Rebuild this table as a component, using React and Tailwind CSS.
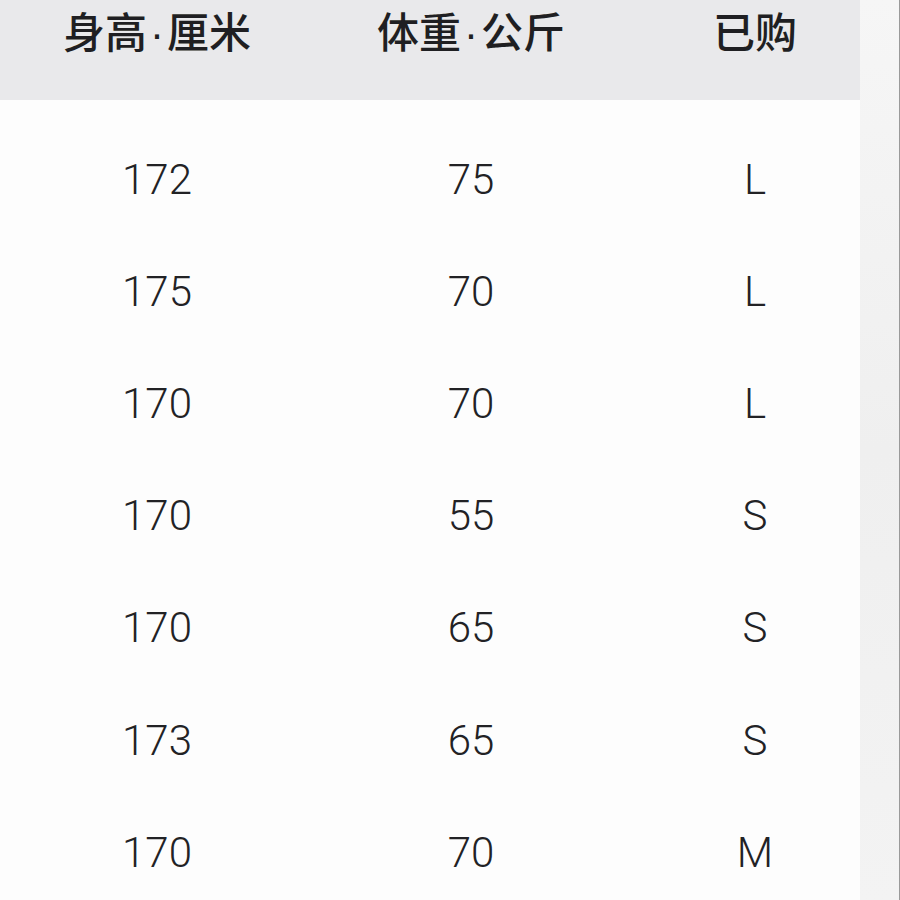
import React from "react";

const rows = [
  ["172", "75", "L"],
  ["175", "70", "L"],
  ["170", "70", "L"],
  ["170", "55", "S"],
  ["170", "65", "S"],
  ["173", "65", "S"],
  ["170", "70", "M"],
];

function Dot() {
  return (
    <span className="mx-[3px]" style={{ fontFamily: '"Liberation Sans", sans-serif' }}>
      ·
    </span>
  );
}

export default function App() {
  return (
    <div className="flex w-[900px] h-[900px] overflow-hidden bg-white">
      <div className="w-[860px] shrink-0 flex flex-col bg-[#fdfdfd]">
        <div
          className="h-[100px] shrink-0 flex bg-[#e9e9eb] text-[#1f1f22] font-medium text-[42px] leading-[42px] pt-[9px]"
          style={{ fontFamily: '"Noto Sans CJK SC", "Noto Sans", sans-serif' }}
        >
          <div className="w-[314px] text-center">身高<Dot />厘米</div>
          <div className="w-[314px] text-center">体重<Dot />公斤</div>
          <div className="w-[232px] pl-[22px] text-center">已购</div>
        </div>
        <div
          className="flex flex-col shrink-0 pt-[23px] text-[#222225] text-[42px] font-light"
          style={{ fontFamily: 'Roboto, "Noto Sans", sans-serif' }}
        >
          {rows.map((r, i) => (
            <div key={i} className="h-[112.2px] shrink-0 flex items-center">
              <div className="w-[314px] text-center">{r[0]}</div>
              <div className="w-[314px] text-center">{r[1]}</div>
              <div className="w-[232px] pl-[22px] text-center">{r[2]}</div>
            </div>
          ))}
        </div>
      </div>
      <div className="w-[40px] shrink-0 bg-gradient-to-b from-[#f6f6f6] via-[#efefef] to-[#f3f3f3] border-r border-[#9a9a9a]" />
    </div>
  );
}
